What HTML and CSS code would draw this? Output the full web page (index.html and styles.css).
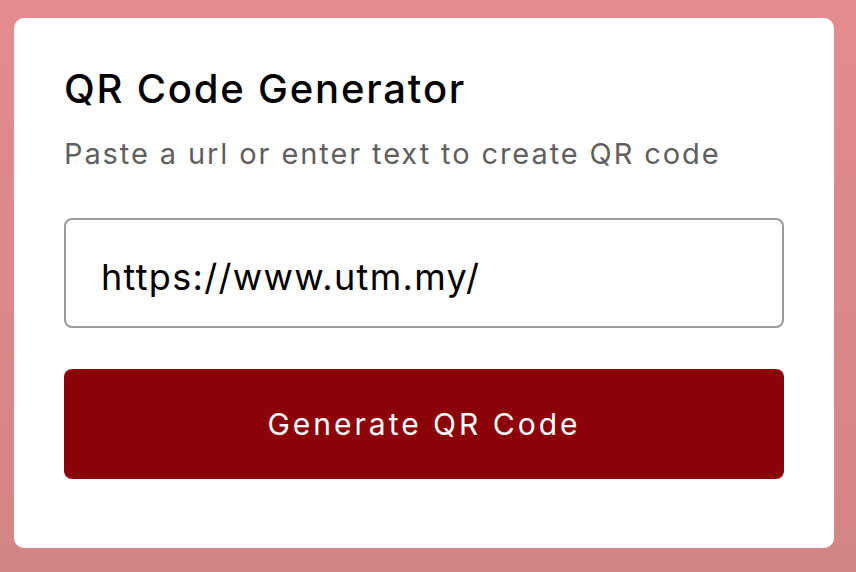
FILE: index.html
```html
<!DOCTYPE html>
<html>
<head>
<meta charset="utf-8">
<link rel="stylesheet" href="styles.css">
</head>
<body>
<div class="card">
  <h1 class="title">QR Code Generator</h1>
  <p class="subtitle">Paste a url or enter text to create QR code</p>
  <input class="url-input" type="text" value="https://www.utm.my/">
  <button class="gen-btn">Generate QR Code</button>
</div>
</body>
</html>
```
FILE: styles.css
```css
html, body {
  margin: 0;
  height: 100%;
}
body {
  background: linear-gradient(180deg, #e28c8f 0%, #d38584 100%);
  font-family: Inter, "Noto Sans", sans-serif;
  padding: 18px 22px 24px 14px;
  box-sizing: border-box;
}
.card {
  background: #fff;
  border-radius: 10px;
  width: 820px;
  height: 530px;
  box-sizing: border-box;
  padding: 47px 50px 70px 50px;
  display: flex;
  flex-direction: column;
}
.title {
  margin: 0;
  font-size: 40px;
  font-weight: 500;
  color: #000;
  line-height: 48px;
  letter-spacing: 1.8px;
}
.subtitle {
  margin: 23px 0 0 0;
  font-size: 29px;
  color: #5f5f5f;
  line-height: 36px;
  letter-spacing: 1.9px;
}
.url-input {
  margin-top: 46px;
  height: 110px;
  flex: none;
  box-sizing: border-box;
  border: 2px solid #9a9a9a;
  border-radius: 8px;
  padding: 7px 35px 0 35px;
  font-family: inherit;
  font-size: 36px;
  letter-spacing: 1.3px;
  color: #000;
  outline: none;
}
.gen-btn {
  margin-top: 41px;
  height: 110px;
  flex: none;
  border: none;
  border-radius: 8px;
  background: #8b0309;
  color: #fff;
  font-family: inherit;
  font-size: 30px;
  letter-spacing: 3px;
}
```
